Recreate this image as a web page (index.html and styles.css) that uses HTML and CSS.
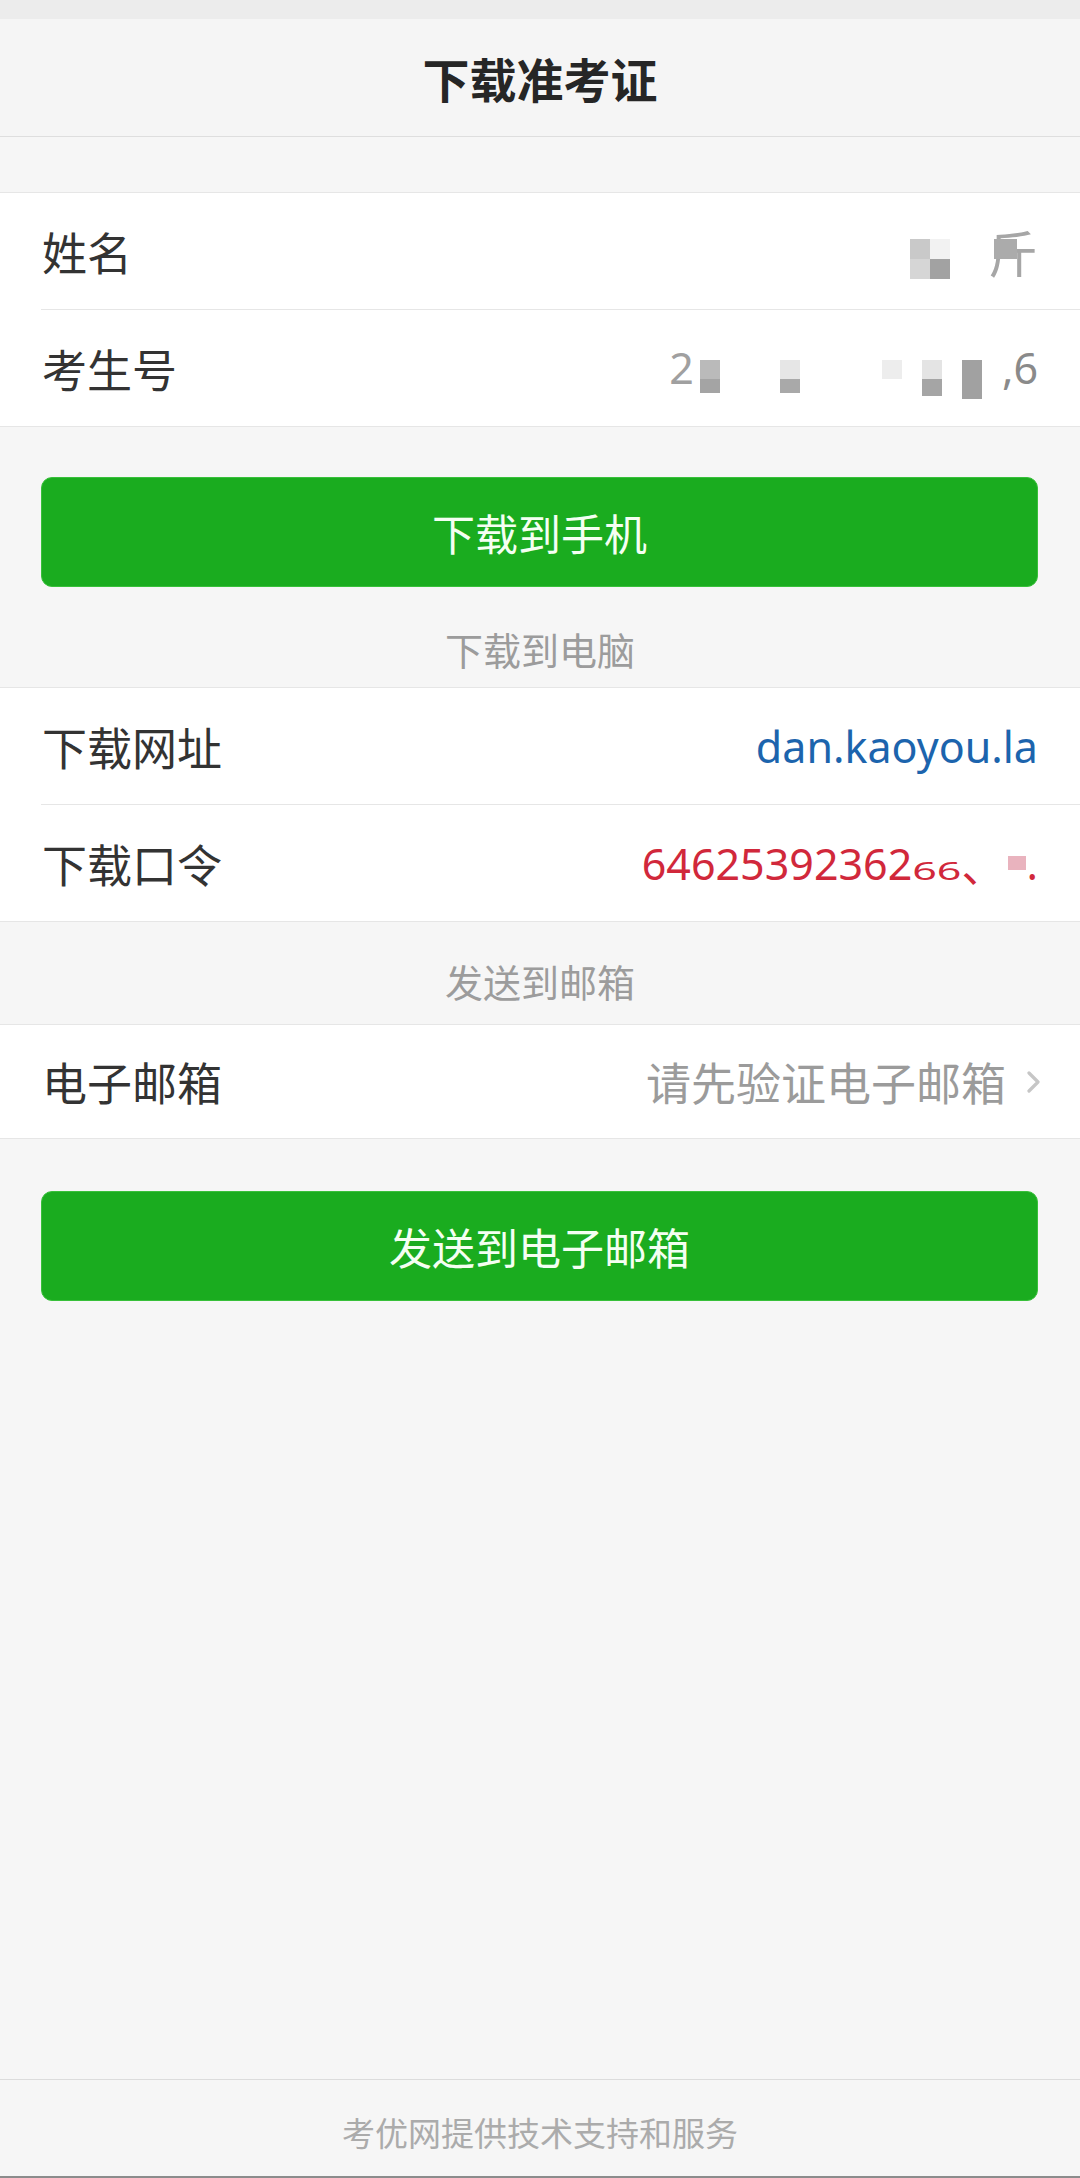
FILE: index.html
```html
<!DOCTYPE html>
<html lang="zh-CN">
<head>
<meta charset="utf-8">
<title>下载准考证</title>
<link rel="stylesheet" href="styles.css">
</head>
<body>
<div class="page">
  <div class="statusbar"></div>
  <header class="navbar"><h1 class="title">下载准考证</h1></header>
  <div class="gap"></div>

  <section class="group">
    <div class="row">
      <span class="label">姓名</span>
      <span class="value name-value">
        <span class="mosaic mosaic-name">
          <i class="m c1"></i><i class="m c0"></i>
          <i class="m c2"></i><i class="m c3"></i>
        </span>
        <span class="name-char">斤<i class="name-cover"></i></span>
      </span>
    </div>
    <div class="row">
      <span class="label">考生号</span>
      <span class="value id-value">
        <span class="lead2">2</span>
        <span class="col blk-a"><i class="m t1"></i><i class="m b1"></i></span>
        <span class="col blk-b"><i class="m t2"></i><i class="m b2"></i></span>
        <span class="col blk-c"><i class="m t3"></i></span>
        <span class="col blk-d"><i class="m t4"></i><i class="m b4"></i></span>
        <span class="col blk-e"><i class="m tall"></i></span>
        <span class="tail6">,6</span>
      </span>
    </div>
  </section>

  <div class="btn-wrap btn-first"><button class="btn">下载到手机</button></div>

  <div class="section-title st-pc">下载到电脑</div>

  <section class="group">
    <div class="row">
      <span class="label">下载网址</span>
      <span class="value link">dan.kaoyou.la</span>
    </div>
    <div class="row">
      <span class="label">下载口令</span>
      <span class="value code">64625392362<span class="squash">66</span>、<i class="pink"></i>.</span>
    </div>
  </section>

  <div class="section-title st-mail">发送到邮箱</div>

  <section class="group">
    <div class="row row-mail">
      <span class="label">电子邮箱</span>
      <span class="value hint">请先验证电子邮箱<svg class="chev" width="16" height="22" viewBox="0 0 16 22"><path d="M3 2 L12 11 L3 20" fill="none" stroke="#c6c6c6" stroke-width="3.2" stroke-linecap="round" stroke-linejoin="round"/></svg></span>
    </div>
  </section>

  <div class="btn-wrap btn-second"><button class="btn">发送到电子邮箱</button></div>

  <footer class="footer">考优网提供技术支持和服务</footer>
</div>
</body>
</html>
```

FILE: styles.css
```css
html, body {
  margin: 0;
  padding: 0;
  background: #f6f6f6;
}
body {
  font-family: "Noto Sans", "Noto Sans CJK SC", sans-serif;
  color: #333;
}
.page {
  min-height: 2178px;
  display: flex;
  flex-direction: column;
}
.statusbar {
  height: 19px;
  background: #ececec;
}
.navbar {
  height: 117px;
  background: #f5f5f5;
  border-bottom: 1px solid #dedede;
  display: flex;
  align-items: center;
  justify-content: center;
}
.title {
  margin: 0;
  font-family: "Noto Sans CJK SC", sans-serif;
  font-size: 47px;
  font-weight: 700;
  color: #262626;
}
.gap {
  height: 55px;
}
.group {
  background: #fff;
  border-top: 1px solid #e6e6e6;
  border-bottom: 1px solid #e6e6e6;
}
.row {
  height: 116px;
  display: flex;
  align-items: center;
  justify-content: space-between;
  padding: 0 42px;
}
.row + .row {
  border-top: 1px solid #e6e6e6;
  margin-left: 41px;
  padding-left: 1px;
}
.row-mail {
  height: 113px;
}
.label {
  font-family: "Noto Sans CJK SC", sans-serif;
  font-size: 45px;
  color: #333;
}
.value {
  font-size: 43px;
  color: #888;
  display: flex;
  align-items: center;
}
.m {
  display: block;
  width: 20px;
}
/* name mosaic */
.name-value {
  height: 60px;
  align-items: flex-start;
}
.mosaic-name {
  display: grid;
  grid-template-columns: 20px 20px;
  grid-auto-rows: 20px;
  margin-top: 18px;
}
.mosaic-name .m { height: 20px; }
.c0 { background: #f2f2f2; }
.c1 { background: #c9c9c9; }
.c2 { background: #d6d6d6; }
.c3 { background: #a2a2a2; }
.name-char {
  position: relative;
  margin-left: 38px;
  font-family: "Noto Sans CJK SC", sans-serif;
  font-size: 50px;
  line-height: 60px;
  color: #a6a6a6;
}
.name-cover {
  position: absolute;
  left: 6px;
  top: 18px;
  width: 23px;
  height: 20px;
  background: #ababab;
}
/* id row */
.id-value {
  height: 60px;
  align-items: flex-start;
}
.lead2 {
  line-height: 60px;
  color: #a0a0a0;
}
.col {
  display: flex;
  flex-direction: column;
  margin-top: 22px;
}
.blk-a { margin-left: 6px; }
.blk-b { margin-left: 60px; }
.blk-c { margin-left: 82px; }
.blk-d { margin-left: 20px; }
.blk-e { margin-left: 20px; }
.t1 { height: 19px; background: #bababa; }
.b1 { height: 14px; background: #a4a4a4; }
.t2 { height: 19px; background: #e6e6e6; }
.b2 { height: 14px; background: #a9a9a9; }
.t3 { height: 19px; background: #ededed; }
.t4 { height: 19px; background: #e4e4e4; }
.b4 { height: 17px; background: #a5a5a5; }
.tall { height: 39px; background: #a1a1a1; }
.tail6 {
  margin-left: 20px;
  line-height: 60px;
  color: #8a8a8a;
}
/* links */
.link {
  color: #1c64ad;
}
.code {
  color: #d1283b;
}
.squash {
  display: inline-block;
  transform: scaleY(0.6);
  transform-origin: 50% 80%;
}
.pink {
  display: inline-block;
  width: 18px;
  height: 14px;
  background: #e9b3be;
  margin-left: 4px;
}
.hint {
  font-family: "Noto Sans CJK SC", sans-serif;
  font-size: 45px;
  color: #9b9b9b;
}
.chev {
  margin-left: 20px;
  margin-right: -4px;
}
/* buttons */
.btn-wrap {
  padding: 0 42px 0 41px;
}
.btn-first { margin-top: 50px; }
.btn-second { margin-top: 52px; }
.btn {
  display: block;
  width: 100%;
  height: 110px;
  border: 1px solid #38c03a;
  border-radius: 11px;
  background: #1aac1f;
  color: #f4fff2;
  font-family: "Noto Sans CJK SC", sans-serif;
  font-size: 43px;
  padding: 0;
}
/* section titles */
.section-title {
  text-align: center;
  font-family: "Noto Sans CJK SC", sans-serif;
  font-size: 38px;
  line-height: 44px;
  color: #9c9c9c;
}
.st-pc { padding: 40px 0 16px; }
.st-mail { padding: 37px 0 21px; }
/* footer */
.footer {
  margin-top: auto;
  border-top: 1px solid #dcdcdc;
  border-bottom: 2px solid #8c8c8c;
  padding: 30px 0 22px;
  line-height: 44px;
  text-align: center;
  font-family: "Noto Sans CJK SC", sans-serif;
  font-size: 33px;
  color: #ababab;
}
```
